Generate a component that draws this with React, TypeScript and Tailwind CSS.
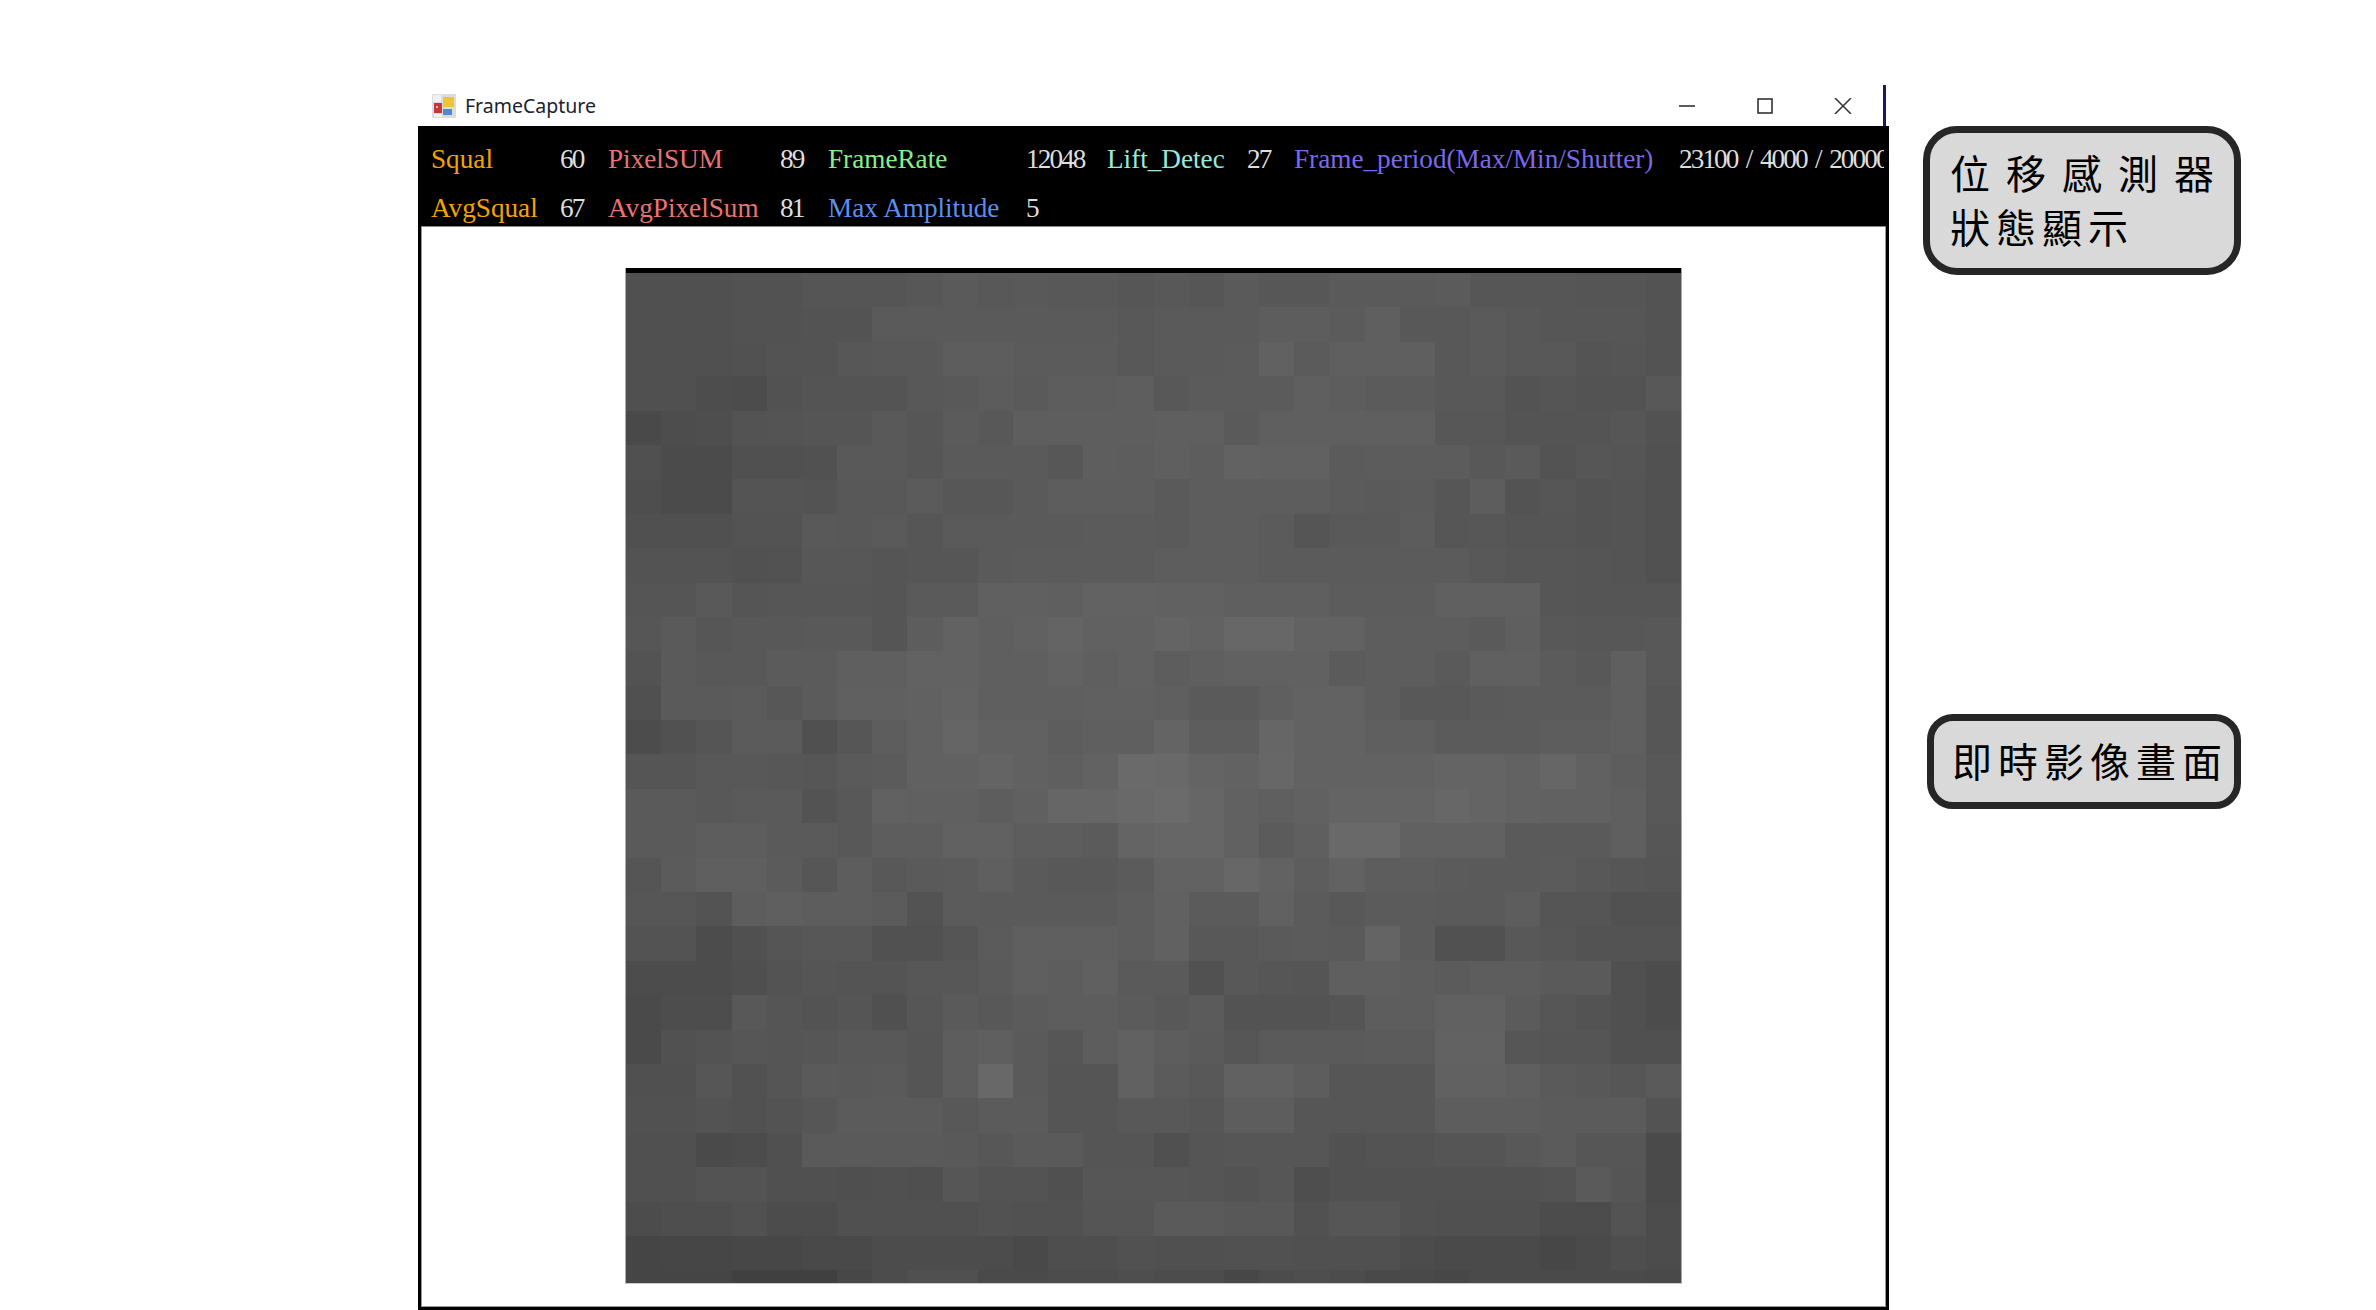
import React from 'react';

// sensor frame: 30 x 30 grey levels, read off the capture
const FRAME: number[][] = [
  [76, 76, 76, 79, 79, 82, 82, 82, 85, 88, 86, 87, 86, 86, 84, 86, 84, 88, 85, 85, 88, 88, 88, 90, 84, 84, 84, 82, 82, 80],
  [76, 76, 76, 79, 79, 80, 80, 88, 88, 88, 88, 88, 88, 88, 86, 88, 88, 88, 92, 92, 90, 94, 86, 86, 88, 86, 84, 84, 84, 80],
  [76, 77, 77, 78, 80, 80, 85, 86, 86, 92, 92, 90, 90, 90, 86, 88, 88, 90, 96, 90, 94, 94, 94, 86, 88, 86, 86, 81, 82, 80],
  [76, 76, 73, 72, 79, 81, 81, 81, 86, 87, 91, 88, 92, 92, 93, 86, 90, 90, 90, 94, 92, 89, 90, 86, 86, 80, 82, 80, 80, 86],
  [68, 73, 74, 80, 81, 83, 83, 87, 84, 90, 86, 93, 93, 93, 93, 94, 94, 88, 94, 94, 94, 94, 94, 85, 85, 81, 81, 81, 84, 79],
  [76, 71, 71, 76, 76, 78, 87, 87, 84, 88, 88, 88, 85, 93, 92, 94, 92, 98, 96, 96, 90, 91, 91, 91, 86, 88, 80, 84, 82, 78],
  [74, 71, 71, 81, 81, 80, 86, 86, 90, 85, 85, 88, 92, 92, 92, 88, 92, 92, 92, 92, 90, 88, 90, 84, 92, 80, 84, 80, 81, 78],
  [77, 77, 77, 80, 80, 87, 86, 88, 84, 88, 88, 88, 88, 90, 90, 88, 92, 92, 90, 82, 87, 87, 91, 84, 85, 82, 82, 80, 81, 78],
  [80, 80, 80, 78, 79, 85, 85, 83, 84, 84, 88, 89, 90, 90, 90, 92, 92, 92, 90, 90, 90, 90, 90, 90, 86, 84, 84, 82, 81, 78],
  [82, 82, 87, 83, 84, 84, 84, 83, 88, 88, 95, 95, 94, 98, 98, 96, 96, 94, 94, 94, 91, 91, 91, 95, 95, 95, 84, 82, 82, 82],
  [84, 88, 84, 86, 86, 87, 87, 82, 92, 98, 94, 96, 100, 96, 96, 100, 98, 104, 104, 98, 98, 92, 92, 92, 88, 94, 86, 85, 85, 86],
  [80, 88, 86, 86, 90, 90, 94, 94, 98, 98, 94, 94, 98, 94, 96, 92, 94, 96, 96, 96, 90, 92, 92, 88, 95, 95, 90, 86, 94, 86],
  [76, 88, 88, 90, 85, 90, 95, 95, 96, 99, 94, 94, 94, 95, 95, 94, 88, 88, 94, 98, 98, 92, 86, 86, 88, 90, 90, 90, 94, 84],
  [72, 78, 82, 90, 90, 76, 84, 92, 97, 101, 96, 96, 92, 94, 94, 100, 92, 92, 102, 98, 98, 94, 94, 90, 90, 90, 92, 92, 94, 84],
  [82, 82, 86, 86, 85, 84, 88, 90, 96, 96, 100, 96, 94, 98, 107, 106, 100, 98, 104, 98, 98, 98, 98, 100, 100, 98, 102, 96, 92, 86],
  [88, 88, 86, 88, 88, 80, 86, 96, 95, 95, 92, 95, 102, 102, 106, 108, 102, 96, 94, 96, 100, 100, 100, 104, 100, 98, 96, 96, 94, 86],
  [88, 88, 92, 92, 88, 88, 86, 92, 92, 96, 96, 92, 92, 90, 100, 102, 102, 96, 90, 94, 106, 106, 96, 96, 96, 88, 88, 88, 94, 84],
  [82, 90, 94, 94, 90, 84, 92, 86, 88, 90, 94, 88, 86, 86, 89, 98, 98, 104, 98, 92, 98, 92, 92, 90, 88, 88, 90, 86, 84, 82],
  [84, 84, 80, 92, 94, 92, 92, 90, 80, 90, 88, 88, 88, 88, 92, 96, 90, 90, 96, 90, 86, 90, 90, 88, 88, 92, 82, 82, 78, 78],
  [80, 80, 72, 76, 82, 85, 85, 78, 78, 82, 90, 94, 94, 94, 92, 96, 86, 86, 88, 90, 88, 100, 90, 78, 78, 86, 84, 80, 80, 80],
  [72, 72, 72, 75, 80, 83, 81, 81, 85, 85, 88, 94, 92, 95, 88, 88, 78, 86, 84, 82, 94, 94, 92, 90, 92, 92, 88, 88, 76, 72],
  [70, 73, 73, 86, 83, 80, 83, 76, 84, 88, 86, 90, 92, 92, 90, 86, 90, 80, 80, 80, 82, 92, 92, 96, 96, 90, 84, 80, 76, 72],
  [70, 78, 80, 84, 82, 84, 86, 86, 82, 92, 94, 88, 84, 92, 96, 92, 88, 84, 88, 88, 88, 90, 90, 98, 98, 84, 82, 82, 76, 76],
  [76, 77, 84, 78, 82, 88, 87, 88, 82, 92, 105, 88, 82, 82, 96, 90, 86, 96, 96, 92, 84, 84, 84, 96, 96, 94, 88, 86, 84, 88],
  [78, 78, 80, 78, 80, 84, 90, 90, 90, 86, 89, 89, 83, 83, 86, 86, 84, 92, 92, 84, 84, 84, 84, 92, 92, 92, 90, 90, 90, 80],
  [76, 76, 70, 72, 76, 88, 88, 88, 88, 87, 85, 88, 88, 82, 82, 76, 82, 84, 84, 84, 78, 80, 80, 82, 82, 86, 90, 84, 84, 70],
  [76, 76, 80, 80, 76, 76, 75, 77, 75, 84, 80, 80, 77, 84, 84, 84, 82, 80, 84, 74, 78, 78, 78, 78, 78, 78, 80, 88, 82, 70],
  [72, 74, 74, 78, 72, 72, 76, 76, 76, 76, 79, 78, 78, 82, 82, 88, 88, 86, 86, 78, 84, 84, 78, 76, 76, 76, 72, 72, 80, 72],
  [64, 65, 65, 66, 66, 68, 68, 72, 72, 72, 72, 68, 74, 74, 78, 76, 76, 78, 78, 76, 76, 76, 72, 70, 70, 70, 66, 70, 74, 72],
  [64, 64, 64, 58, 58, 58, 66, 72, 76, 76, 70, 70, 72, 72, 74, 72, 72, 66, 72, 74, 72, 68, 68, 66, 70, 70, 70, 70, 70, 68],
];

// the capture is a bit flatter than the raw read-off
const grey = (v: number) => {
  const g = Math.round(88 + (v - 86) * 0.85);
  return `rgb(${g},${g},${g})`;
};

const Num: React.FC<{ children: React.ReactNode }> = ({ children }) => (
  <span className="whitespace-nowrap tracking-[-1.9px] text-[#dedede] [word-spacing:3.5px]">{children}</span>
);

const AppIcon = () => (
  <svg width="24" height="24" viewBox="0 0 24 24">
    <rect width="24" height="24" rx="1" fill="#dcdcdc" />
    <rect x="1" y="1" width="8" height="7" fill="#f0f0f0" />
    <rect x="11" y="3" width="11" height="10" fill="#f0c238" />
    <rect x="2" y="9" width="8" height="10" fill="#c23a34" />
    <rect x="4" y="12" width="2" height="2" fill="#f0a0a0" />
    <rect x="11" y="15" width="9" height="6" fill="#4f88d8" />
    <rect x="2" y="20" width="8" height="3" fill="#f0f0f0" />
  </svg>
);

const App = () => {
  return (
    <div className="flex h-[1310px] w-full overflow-hidden bg-white pl-[418px]">
      <div className="mt-[85px] flex h-[1225px] w-[1471px] flex-col">
        {/* title bar */}
        <div className="flex h-[41px] items-center pl-[14px] pr-[3px]">
          <AppIcon />
          <span className="ml-[9px] font-['Noto_Sans',sans-serif] text-[19.5px] text-[#1b2230]">FrameCapture</span>
          <div className="ml-auto flex h-full items-center border-r-[3px] border-[#1a1a5a] pr-[1px] text-[#333]">
            <div className="flex w-[78px] justify-center">
              <svg width="18" height="16" viewBox="0 0 18 16" fill="none" stroke="currentColor" strokeWidth="1.6"><path d="M1 8h16" /></svg>
            </div>
            <div className="flex w-[78px] justify-center">
              <svg width="16" height="16" viewBox="0 0 16 16" fill="none" stroke="currentColor" strokeWidth="1.6"><rect x="1" y="1" width="14" height="14" /></svg>
            </div>
            <div className="flex w-[78px] justify-center">
              <svg width="18" height="16" viewBox="0 0 18 16" fill="none" stroke="currentColor" strokeWidth="1.5"><path d="M1 0l16 16M17 0L1 16" /></svg>
            </div>
          </div>
        </div>

        <div className="flex min-h-0 flex-1 flex-col border-x-[3px] border-b-[3px] border-black">
          {/* status panel */}
          <div className="flex h-[101px] flex-col overflow-hidden border-b border-[#888] bg-black font-['Liberation_Serif',serif] text-[27.2px]">
            <div className="h-[2px] bg-[#555]" />
            <div className="h-[2px] bg-black" />
            <div className="h-[2px] bg-[#777]" />
            <div className="grid h-[49px] grid-cols-[129px_48px_172px_48px_198px_81px_140px_47px_385px_1fr] items-center pl-[10px] pr-[2px] pt-[13px]">
              <span className="text-[#f5a300]">Squal</span>
              <Num>60</Num>
              <span className="text-[#e97373]">PixelSUM</span>
              <Num>89</Num>
              <span className="text-[#85f085]">FrameRate</span>
              <Num>12048</Num>
              <span className="text-[#9be8da]">Lift_Detec</span>
              <Num>27</Num>
              <span className="whitespace-nowrap text-[#7b68ee]">Frame_period(Max/Min/Shutter)</span>
              <div className="overflow-hidden"><Num>23100 / 4000 / 20000</Num></div>
            </div>
            <div className="grid grid-cols-[129px_48px_172px_48px_198px_81px] items-center pl-[10px] pt-[13px]">
              <span className="text-[#f5a300]">AvgSqual</span>
              <Num>67</Num>
              <span className="whitespace-nowrap text-[#e97373]">AvgPixelSum</span>
              <Num>81</Num>
              <span className="whitespace-nowrap text-[#5b8fee]">Max Amplitude</span>
              <Num>5</Num>
            </div>
          </div>

          {/* live image */}
          <div className="flex-1 border-x border-b border-[#999] bg-white pl-[203px] pt-[41px]">
            <div className="w-[1057px] border-x border-b border-x-[#aaa] border-b-[#ccc]">
              <div className="h-[5px] bg-black" />
              <div className="grid h-[1010px] grid-cols-[repeat(30,minmax(0,1fr))] auto-rows-[34.4px] overflow-hidden">
                {FRAME.flat().map((v, i) => (
                  <div key={i} style={{ backgroundColor: grey(v) }} />
                ))}
              </div>
            </div>
          </div>
        </div>
      </div>

      {/* callouts */}
      <div className="ml-[34px] flex w-[318px] flex-col items-end pt-[126px] font-['Noto_Sans_CJK_TC',sans-serif] text-[40px] text-black">
        <div className="h-[149px] w-[318px] rounded-[34px] border-[7px] border-[#262626] bg-[#d9d9d9] pl-[20px] pt-[12px] leading-[54px]">
          <div className="whitespace-nowrap tracking-[16px]">位移感測器</div>
          <div className="whitespace-nowrap tracking-[6px]">狀態顯示</div>
        </div>
        <div className="mt-[439px] flex h-[95px] w-[314px] items-center rounded-[26px] border-[7px] border-[#262626] bg-[#d9d9d9] pb-[4px] pl-[18px]">
          <span className="whitespace-nowrap tracking-[6px]">即時影像畫面</span>
        </div>
      </div>
    </div>
  );
};

export default App;
